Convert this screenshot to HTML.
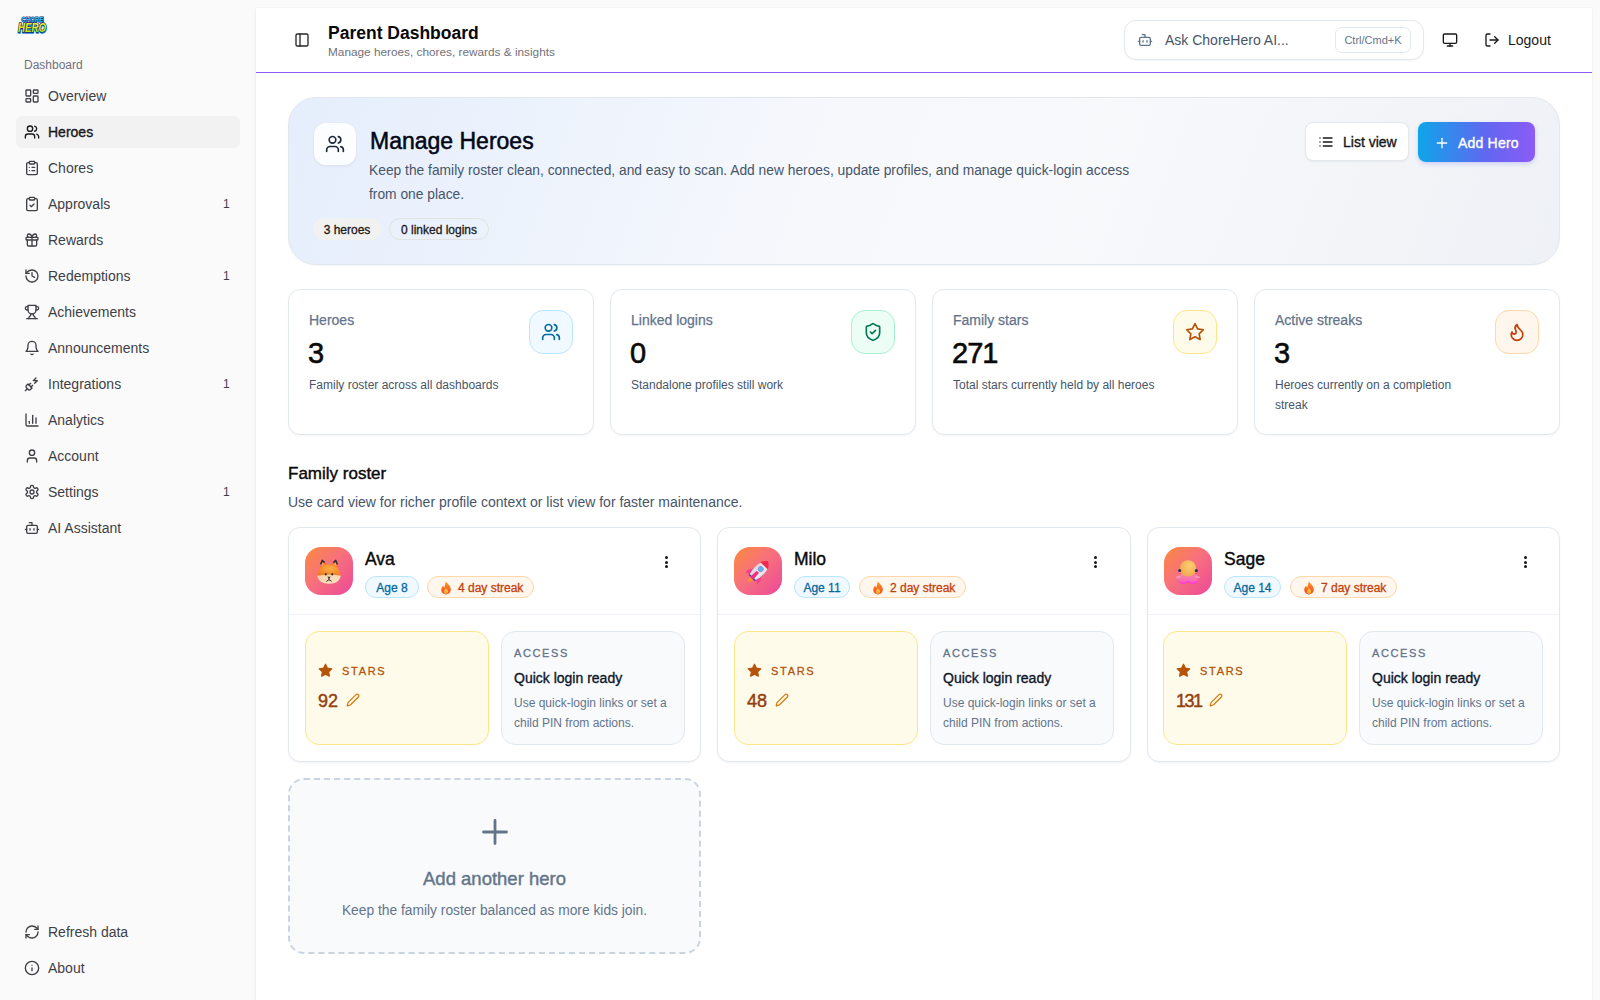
<!DOCTYPE html>
<html><head><meta charset="utf-8">
<style>
*{box-sizing:border-box;margin:0;padding:0}
html,body{width:1600px;height:1000px;overflow:hidden}
body{font-family:"Liberation Sans",sans-serif;background:#fafafa;color:#09090b;position:relative}
.abs{position:absolute}
svg.i{fill:none;stroke:currentColor;stroke-width:2;stroke-linecap:round;stroke-linejoin:round;position:absolute}
/* sidebar */
.side{position:absolute;left:0;top:0;width:256px;height:1000px;background:#fafafa}
.navlabel{position:absolute;left:24px;top:57px;font-size:12px;color:#71717a;line-height:16px}
.nav{position:absolute;left:16px;width:224px;height:32px;border-radius:6px;color:#3f3f46;font-size:14px}
.nav.active{background:#f2f2f3;color:#18181b;-webkit-text-stroke:.35px #18181b}
.nav svg{left:8px;top:8px;width:16px;height:16px}
.nav span{position:absolute;left:32px;top:0;line-height:32px;white-space:nowrap}
.nav .b{position:absolute;left:207px;top:0;line-height:32px;font-size:12px;color:#3f3f46}
/* main panel */
.panel{position:absolute;left:256px;top:8px;width:1336px;height:1000px;background:#fff;box-shadow:0 0 0 1px rgba(0,0,0,.018),-1px 1px 3px rgba(0,0,0,.035)}
.hdr{position:absolute;left:0;top:0;width:1336px;height:65px;border-bottom:1px solid #8b5cf6}

.banner{position:absolute;left:32px;top:89px;width:1272px;height:168px;border:1px solid #e1e7ef;border-radius:28px;background:linear-gradient(110deg,#e5eefc 0%,#ecf2fc 18%,#f6f8fc 42%,#f7f9fb 62%,#f2f4f8 85%,#eef1f6 100%);box-shadow:0 1px 2px rgba(15,23,42,.04)}
.chip{position:absolute;top:120px;height:22px;border-radius:11px;font-size:12px;-webkit-text-stroke:.3px #1c1917;line-height:24px;color:#1c1917;text-align:center}
.btn{position:absolute;top:24px;height:40px;border-radius:8px;font-size:14px;-webkit-text-stroke:.35px currentColor;line-height:40px}
.stat{position:absolute;top:281px;width:306px;height:146px;border:1px solid #e2e8f0;border-radius:12px;background:#fff;box-shadow:0 1px 2px rgba(0,0,0,.04)}
.stat .l{position:absolute;left:20px;top:22px;font-size:14px;-webkit-text-stroke:.25px #64748b;line-height:16px;color:#64748b}
.stat .v{position:absolute;left:19px;top:46px;font-size:29px;line-height:34px;color:#0a0a0a;-webkit-text-stroke:.6px #0a0a0a;letter-spacing:-1px}
.stat .d{position:absolute;left:20px;top:85px;width:200px;font-size:12px;line-height:20px;color:#475569}
.stat .ib{position:absolute;left:240px;top:20px;width:44px;height:44px;border-radius:14px;border:1px solid}
.stat .ib svg{left:11px;top:11px;width:20px;height:20px}

.card{position:absolute;top:519px;width:413px;height:235px;border:1px solid #e2e8f0;border-radius:12px;background:#fff;box-shadow:0 1px 2px rgba(15,23,42,.05)}
.av{position:absolute;left:16px;top:19px;width:48px;height:48px;border-radius:16px;background:linear-gradient(135deg,#fb8a3c 0%,#f8717c 45%,#ec4899 100%)}
.av svg{position:absolute;left:0;top:0}
.nm{position:absolute;left:76px;top:21px;font-size:17.5px;-webkit-text-stroke:.4px #09090b;line-height:20px;color:#09090b}
.age{position:absolute;left:76px;top:48px;height:22px;border:1px solid #bae6fd;background:#f0f9ff;border-radius:11px;color:#0369a1;font-size:12px;-webkit-text-stroke:.3px #0369a1;line-height:23px;text-align:center}
.stk{position:absolute;top:48px;height:22px;border:1px solid #fed7aa;background:#fff7ed;border-radius:11px;color:#c2410c;font-size:12px;-webkit-text-stroke:.3px #c2410c;line-height:23px}
.stk svg{position:absolute;left:12px;top:3.5px}
.stk span{position:absolute;left:30px;top:0;white-space:nowrap}
.dots{position:absolute;left:375.6px;top:27px;width:4px;height:14px}
.dots i{position:absolute;left:0;width:3px;height:3px;border-radius:50%;background:#18181b}
.dv{position:absolute;left:0;top:86px;width:411px;height:1px;background:#eef1f5}
.sb{position:absolute;left:16px;top:103px;width:184px;height:114px;border:1px solid #fde68a;background:#fffbeb;border-radius:14px}
.sb .t{position:absolute;left:36px;top:31.5px;font-size:11px;-webkit-text-stroke:.3px #b45309;letter-spacing:1.7px;color:#b45309;line-height:14px}
.sb .n{position:absolute;left:12px;top:59px;font-size:18px;-webkit-text-stroke:.45px #92400e;color:#92400e;line-height:20px}
.ab{position:absolute;left:212px;top:103px;width:184px;height:114px;border:1px solid #e2e8f0;background:#f8fafc;border-radius:14px}
.ab .t{position:absolute;left:12px;top:13.5px;font-size:11px;-webkit-text-stroke:.3px #64748b;letter-spacing:1.6px;color:#64748b;line-height:14px}
.ab .q{position:absolute;left:12px;top:38px;font-size:14px;-webkit-text-stroke:.35px #0f172a;color:#0f172a;line-height:16px}
.ab .x{position:absolute;left:12px;top:61px;width:170px;font-size:12px;color:#64748b;line-height:20px}
.addc{position:absolute;left:32px;top:770px;width:413px;height:176px;border:2px dashed #cbd5e1;border-radius:16px;background:#f8fafc}
</style></head>
<body>
<div class="side">
  <!-- logo -->
  <svg class="abs" style="left:13px;top:12px" width="38" height="24" viewBox="0 0 38 24">
    <defs><linearGradient id="hg" x1="0" y1="0" x2="0" y2="1"><stop offset="0" stop-color="#fff23a"/><stop offset=".55" stop-color="#d6f01a"/><stop offset="1" stop-color="#8ede10"/></linearGradient>
    <linearGradient id="cg" x1="0" y1="0" x2="0" y2="1"><stop offset="0" stop-color="#4fe0ff"/><stop offset="1" stop-color="#12a8ee"/></linearGradient></defs>
    <text x="19.5" y="9.6" text-anchor="middle" font-family="Liberation Sans" font-weight="bold" font-size="7" textLength="22" lengthAdjust="spacingAndGlyphs" fill="url(#cg)" stroke="#17206a" stroke-width="1.1" paint-order="stroke">CHORE</text>
    <text x="19" y="20" text-anchor="middle" font-family="Liberation Sans" font-weight="bold" font-style="italic" font-size="12" textLength="28" lengthAdjust="spacingAndGlyphs" fill="#1a8be0" stroke="#1a8be0" stroke-width="1.6" transform="translate(0.4,1.1)">HERO</text>
    <text x="19" y="20" text-anchor="middle" font-family="Liberation Sans" font-weight="bold" font-style="italic" font-size="12" textLength="28" lengthAdjust="spacingAndGlyphs" fill="url(#hg)" stroke="#17206a" stroke-width="1.3" paint-order="stroke">HERO</text>
  </svg>
  <div class="navlabel">Dashboard</div>

  <div class="nav" style="top:80px"><svg class="i" viewBox="0 0 24 24"><rect width="7" height="9" x="3" y="3" rx="1"/><rect width="7" height="5" x="14" y="3" rx="1"/><rect width="7" height="9" x="14" y="12" rx="1"/><rect width="7" height="5" x="3" y="16" rx="1"/></svg><span>Overview</span></div>
  <div class="nav active" style="top:116px"><svg class="i" viewBox="0 0 24 24"><path d="M16 21v-2a4 4 0 0 0-4-4H6a4 4 0 0 0-4 4v2"/><circle cx="9" cy="7" r="4"/><path d="M22 21v-2a4 4 0 0 0-3-3.87"/><path d="M16 3.13a4 4 0 0 1 0 7.75"/></svg><span>Heroes</span></div>
  <div class="nav" style="top:152px"><svg class="i" viewBox="0 0 24 24"><rect width="8" height="4" x="8" y="2" rx="1" ry="1"/><path d="M16 4h2a2 2 0 0 1 2 2v14a2 2 0 0 1-2 2H6a2 2 0 0 1-2-2V6a2 2 0 0 1 2-2h2"/><path d="M12 11h4"/><path d="M12 16h4"/><path d="M8 11h.01"/><path d="M8 16h.01"/></svg><span>Chores</span></div>
  <div class="nav" style="top:188px"><svg class="i" viewBox="0 0 24 24"><rect width="8" height="4" x="8" y="2" rx="1" ry="1"/><path d="M16 4h2a2 2 0 0 1 2 2v14a2 2 0 0 1-2 2H6a2 2 0 0 1-2-2V6a2 2 0 0 1 2-2h2"/><path d="m9 14 2 2 4-4"/></svg><span>Approvals</span><div class="b">1</div></div>
  <div class="nav" style="top:224px"><svg class="i" viewBox="0 0 24 24"><rect x="3" y="8" width="18" height="4" rx="1"/><path d="M12 8v13"/><path d="M19 12v7a2 2 0 0 1-2 2H7a2 2 0 0 1-2-2v-7"/><path d="M7.5 8a2.5 2.5 0 0 1 0-5A4.8 8 0 0 1 12 8a4.8 8 0 0 1 4.5-5 2.5 2.5 0 0 1 0 5"/></svg><span>Rewards</span></div>
  <div class="nav" style="top:260px"><svg class="i" viewBox="0 0 24 24"><path d="M3 12a9 9 0 1 0 9-9 9.75 9.75 0 0 0-6.74 2.74L3 8"/><path d="M3 3v5h5"/><path d="M12 7v5l4 2"/></svg><span>Redemptions</span><div class="b">1</div></div>
  <div class="nav" style="top:296px"><svg class="i" viewBox="0 0 24 24"><path d="M6 9H4.5a2.5 2.5 0 0 1 0-5H6"/><path d="M18 9h1.5a2.5 2.5 0 0 0 0-5H18"/><path d="M4 22h16"/><path d="M10 14.66V17c0 .55-.47.98-.97 1.21C7.850 18.75 7 20.24 7 22"/><path d="M14 14.66V17c0 .55.47.98.97 1.21C16.15 18.75 17 20.24 17 22"/><path d="M18 2H6v7a6 6 0 0 0 12 0V2Z"/></svg><span>Achievements</span></div>
  <div class="nav" style="top:332px"><svg class="i" viewBox="0 0 24 24"><path d="M6 8a6 6 0 0 1 12 0c0 7 3 9 3 9H3s3-2 3-9"/><path d="M10.3 21a1.94 1.94 0 0 0 3.4 0"/></svg><span>Announcements</span></div>
  <div class="nav" style="top:368px"><svg class="i" viewBox="0 0 24 24"><path d="M6.3 20.3a2.4 2.4 0 0 0 3.4 0L12 18l-6-6-2.3 2.3a2.4 2.4 0 0 0 0 3.4Z"/><path d="m2 22 3-3"/><path d="M7.5 13.5 10 11"/><path d="M10.5 16.5 13 14"/><path d="m18 3-4 4h6l-4 4"/></svg><span>Integrations</span><div class="b">1</div></div>
  <div class="nav" style="top:404px"><svg class="i" viewBox="0 0 24 24"><path d="M3 3v16a2 2 0 0 0 2 2h16"/><path d="M18 17V9"/><path d="M13 17V5"/><path d="M8 17v-3"/></svg><span>Analytics</span></div>
  <div class="nav" style="top:440px"><svg class="i" viewBox="0 0 24 24"><path d="M19 21v-2a4 4 0 0 0-4-4H9a4 4 0 0 0-4 4v2"/><circle cx="12" cy="7" r="4"/></svg><span>Account</span></div>
  <div class="nav" style="top:476px"><svg class="i" viewBox="0 0 24 24"><path d="M12.22 2h-.44a2 2 0 0 0-2 2v.18a2 2 0 0 1-1 1.730l-.43.25a2 2 0 0 1-2 0l-.15-.08a2 2 0 0 0-2.73.73l-.22.38a2 2 0 0 0 .73 2.73l.15.1a2 2 0 0 1 1 1.72v.51a2 2 0 0 1-1 1.74l-.15.09a2 2 0 0 0-.73 2.73l.22.38a2 2 0 0 0 2.73.73l.15-.08a2 2 0 0 1 2 0l.43.25a2 2 0 0 1 1 1.73V20a2 2 0 0 0 2 2h.44a2 2 0 0 0 2-2v-.18a2 2 0 0 1 1-1.73l.43-.25a2 2 0 0 1 2 0l.15.08a2 2 0 0 0 2.73-.73l.22-.39a2 2 0 0 0-.73-2.73l-.15-.08a2 2 0 0 1-1-1.74v-.5a2 2 0 0 1 1-1.74l.15-.09a2 2 0 0 0 .73-2.73l-.22-.38a2 2 0 0 0-2.73-.73l-.15.08a2 2 0 0 1-2 0l-.43-.25a2 2 0 0 1-1-1.73V4a2 2 0 0 0-2-2z"/><circle cx="12" cy="12" r="3"/></svg><span>Settings</span><div class="b">1</div></div>
  <div class="nav" style="top:512px"><svg class="i" viewBox="0 0 24 24"><path d="M12 8V4H8"/><rect width="16" height="12" x="4" y="8" rx="2"/><path d="M2 14h2"/><path d="M20 14h2"/><path d="M15 13v2"/><path d="M9 13v2"/></svg><span>AI Assistant</span></div>

  <div class="nav" style="top:916px"><svg class="i" viewBox="0 0 24 24"><path d="M3 12a9 9 0 0 1 9-9 9.75 9.75 0 0 1 6.74 2.74L21 8"/><path d="M21 3v5h-5"/><path d="M21 12a9 9 0 0 1-9 9 9.75 9.75 0 0 1-6.74-2.74L3 16"/><path d="M8 16H3v5"/></svg><span>Refresh data</span></div>
  <div class="nav" style="top:952px"><svg class="i" viewBox="0 0 24 24"><circle cx="12" cy="12" r="10"/><path d="M12 16v-4"/><path d="M12 8h.01"/></svg><span>About</span></div>
</div>

<div class="panel">
  <div class="hdr">
    <svg class="i" style="left:38px;top:24px;width:16px;height:16px;color:#27272a" viewBox="0 0 24 24"><rect width="18" height="18" x="3" y="3" rx="2"/><path d="M9 3v18"/></svg>
    <div class="abs" style="left:72px;top:14px;font-size:17.5px;font-weight:bold;line-height:22px;color:#09090b">Parent Dashboard</div>
    <div class="abs" style="left:72px;top:37px;font-size:11.8px;line-height:15px;color:#71717a">Manage heroes, chores, rewards &amp; insights</div>
    <div class="abs" style="left:868px;top:12px;width:300px;height:40px;border:1px solid #e2e8f0;border-radius:12px;background:#fff;box-shadow:0 1px 2px rgba(15,23,42,.04)">
      <svg class="i" style="left:12px;top:11px;width:16px;height:16px;color:#64748b" viewBox="0 0 24 24"><path d="M12 8V4H8"/><rect width="16" height="12" x="4" y="8" rx="2"/><path d="M2 14h2"/><path d="M20 14h2"/><path d="M15 13v2"/><path d="M9 13v2"/></svg>
      <div class="abs" style="left:40px;top:0;line-height:38px;font-size:14px;color:#475569">Ask ChoreHero AI...</div>
      <div class="abs" style="left:210px;top:6px;width:76px;height:26px;border:1px solid #e2e8f0;border-radius:7px;font-size:11px;line-height:24px;text-align:center;color:#64748b">Ctrl/Cmd+K</div>
    </div>
    <svg class="i" style="left:1186px;top:24px;width:16px;height:16px;color:#18181b" viewBox="0 0 24 24"><rect width="20" height="14" x="2" y="3" rx="2"/><line x1="8" x2="16" y1="21" y2="21"/><line x1="12" x2="12" y1="17" y2="21"/></svg>
    <svg class="i" style="left:1228px;top:24px;width:16px;height:16px;color:#18181b" viewBox="0 0 24 24"><path d="M9 21H5a2 2 0 0 1-2-2V5a2 2 0 0 1 2-2h4"/><polyline points="16 17 21 12 16 7"/><line x1="21" x2="9" y1="12" y2="12"/></svg>
    <div class="abs" style="left:1252px;top:0;line-height:64px;font-size:14px;color:#18181b">Logout</div>
  </div>


  <div class="banner">
    <div class="abs" style="left:25px;top:25px;width:42px;height:42px;border-radius:12px;background:#fcfdfe;box-shadow:0 1px 3px rgba(15,23,42,.08)">
      <svg class="i" style="left:11px;top:11px;width:20px;height:20px;color:#1e293b" viewBox="0 0 24 24"><path d="M16 21v-2a4 4 0 0 0-4-4H6a4 4 0 0 0-4 4v2"/><circle cx="9" cy="7" r="4"/><path d="M22 21v-2a4 4 0 0 0-3-3.87"/><path d="M16 3.13a4 4 0 0 1 0 7.75"/></svg>
    </div>
    <div class="abs" style="left:81px;top:29px;font-size:23px;-webkit-text-stroke:.5px #020617;line-height:28px;color:#020617">Manage Heroes</div>
    <div class="abs" style="left:80px;top:61px;width:790px;font-size:13.8px;line-height:24px;color:#475569">Keep the family roster clean, connected, and easy to scan. Add new heroes, update profiles, and manage quick-login access from one place.</div>
    <div class="chip" style="left:24px;width:68px;background:#f1f1f0">3 heroes</div>
    <div class="chip" style="left:100px;width:100px;border:1px solid #e2e2e0;line-height:22px">0 linked logins</div>
    <div class="btn" style="left:1016px;width:104px;top:24px;height:39px;line-height:38px;background:#fff;border:1px solid #e2e8f0;color:#171717;box-shadow:0 1px 2px rgba(0,0,0,.05)">
      <svg class="i" style="left:12px;top:11px;width:16px;height:16px" viewBox="0 0 24 24"><path d="M3 12h.01"/><path d="M3 18h.01"/><path d="M3 6h.01"/><path d="M8 12h13"/><path d="M8 18h13"/><path d="M8 6h13"/></svg>
      <span class="abs" style="left:37px;top:0">List view</span>
    </div>
    <div class="btn" style="left:1129px;width:117px;top:24px;background:linear-gradient(90deg,#0ea5e9 0%,#6366f1 60%,#8b5cf6 100%);color:#fff;box-shadow:0 2px 4px rgba(99,102,241,.25)">
      <svg class="i" style="left:16px;top:12.5px;width:16px;height:16px" viewBox="0 0 24 24"><path d="M5 12h14"/><path d="M12 5v14"/></svg>
      <span class="abs" style="left:40px;top:1px;letter-spacing:.2px">Add Hero</span>
    </div>
  </div>

  <div class="stat" style="left:32px">
    <div class="l">Heroes</div><div class="v">3</div><div class="d">Family roster across all dashboards</div>
    <div class="ib" style="background:#f0f9ff;border-color:#bae6fd;color:#0369a1"><svg class="i" viewBox="0 0 24 24"><path d="M16 21v-2a4 4 0 0 0-4-4H6a4 4 0 0 0-4 4v2"/><circle cx="9" cy="7" r="4"/><path d="M22 21v-2a4 4 0 0 0-3-3.87"/><path d="M16 3.13a4 4 0 0 1 0 7.75"/></svg></div>
  </div>
  <div class="stat" style="left:354px">
    <div class="l">Linked logins</div><div class="v">0</div><div class="d">Standalone profiles still work</div>
    <div class="ib" style="background:#ecfdf5;border-color:#a7f3d0;color:#047857"><svg class="i" viewBox="0 0 24 24"><path d="M20 13c0 5-3.5 7.5-7.66 8.95a1 1 0 0 1-.67-.01C7.5 20.5 4 18 4 13V6a1 1 0 0 1 1-1c2 0 4.5-1.2 6.24-2.72a1.17 1.17 0 0 1 1.52 0C14.51 3.810 17 5 19 5a1 1 0 0 1 1 1z"/><path d="m9 12 2 2 4-4"/></svg></div>
  </div>
  <div class="stat" style="left:676px">
    <div class="l">Family stars</div><div class="v">271</div><div class="d" style="width:230px">Total stars currently held by all heroes</div>
    <div class="ib" style="background:#fffbeb;border-color:#fde68a;color:#b45309"><svg class="i" viewBox="0 0 24 24"><polygon points="12 2 15.09 8.26 22 9.27 17 14.14 18.18 21.02 12 17.77 5.82 21.02 7 14.14 2 9.27 8.91 8.26 12 2"/></svg></div>
  </div>
  <div class="stat" style="left:998px">
    <div class="l">Active streaks</div><div class="v">3</div><div class="d" style="width:190px">Heroes currently on a completion streak</div>
    <div class="ib" style="background:#fff7ed;border-color:#fed7aa;color:#c2410c"><svg class="i" viewBox="0 0 24 24"><path d="M8.5 14.5A2.5 2.5 0 0 0 11 12c0-1.38-.5-2-1-3-1.072-2.143-.224-4.054 2-6 .5 2.5 2 4.9 4 6.5 2 1.6 3 3.5 3 5.5a7 7 0 1 1-14 0c0-1.153.433-2.294 1-3a2.5 2.5 0 0 0 2.5 2.5z"/></svg></div>
  </div>

  <div class="abs" style="left:32px;top:456px;font-size:17px;-webkit-text-stroke:.4px #09090b;line-height:20px;color:#09090b">Family roster</div>
  <div class="abs" style="left:32px;top:485px;font-size:14px;line-height:18px;color:#475569">Use card view for richer profile context or list view for faster maintenance.</div>

  <div class="card" style="left:32px">
    <div class="av"><svg width="48" height="48" viewBox="0 0 48 48"><defs><radialGradient id="fh" cx=".55" cy=".35" r=".7"><stop offset="0" stop-color="#fbad4a"/><stop offset="1" stop-color="#ee7a1c"/></radialGradient><linearGradient id="fm" x1="0" y1="0" x2="1" y2="1"><stop offset="0" stop-color="#f6cfa8"/><stop offset="1" stop-color="#fde6c6"/></linearGradient></defs>
<path d="M14.2 25 L17.3 13.6 L23.5 19.5Z" fill="#ec7420"/><path d="M33.8 25 L30.7 13.6 L24.5 19.5Z" fill="#ec7420"/>
<path d="M16.3 19 L17.3 15.2 L19.8 17.8Z" fill="#f7a070"/><path d="M31.7 19 L30.7 15.2 L28.2 17.8Z" fill="#f7a070"/>
<path d="M15.6 17.4 L17.3 13.4 L19.6 15.6" fill="none" stroke="#3a2c34" stroke-width="1.5" stroke-linejoin="round"/><path d="M32.4 17.4 L30.7 13.4 L28.4 15.6" fill="none" stroke="#3a2c34" stroke-width="1.5" stroke-linejoin="round"/>
<path d="M12.6 29.5 C12.6 21 17.2 17.2 24 17.2 C30.8 17.2 35.4 21 35.4 29.5Z" fill="url(#fh)"/>
<path d="M12.2 28.8 Q24 26.8 35.8 28.8 Q34.4 36.8 24 36.8 Q13.6 36.8 12.2 28.8Z" fill="url(#fm)"/>
<ellipse cx="20.8" cy="27.2" rx=".9" ry="1.2" fill="#3a2a2e"/><ellipse cx="27.2" cy="27.2" rx=".9" ry="1.2" fill="#3a2a2e"/>
<path d="M22.3 29.8h3.4l-1.7 1.9z" fill="#2e2226"/><path d="M24 31.4v1.4M21.6 34.2l2.4-1.5 2.4 1.5" stroke="#2e2226" stroke-width=".9" fill="none" stroke-linecap="round"/>
</svg></div>
    <div class="nm">Ava</div>
    <div class="age" style="width:54px">Age 8</div>
    <div class="stk" style="left:138px;width:107px"><svg width="12" height="14" viewBox="0 0 12 14"><defs><linearGradient id="fl" x1="0" y1="0" x2="0" y2="1"><stop offset="0" stop-color="#ff9a2e"/><stop offset="1" stop-color="#f0441e"/></linearGradient><linearGradient id="fl2" x1="0" y1="0" x2="0" y2="1"><stop offset="0" stop-color="#ffd24a"/><stop offset="1" stop-color="#ff9a2e"/></linearGradient></defs><path d="M6 .6C6.8 2.6 10.8 4.6 10.8 8.6 10.8 11.4 8.7 13.4 6 13.4S1.2 11.4 1.2 8.8C1.2 6.6 2.6 5.4 3.2 4.4 3.6 5.6 4 6.2 4.6 6.4 4.6 4.2 5.4 2.2 6 .6Z" fill="url(#fl)"/><path d="M6 7.2C7 8.4 8.2 9.4 8.2 10.8 8.2 12.2 7.2 13.2 6 13.2S3.8 12.2 3.8 10.8C3.8 9.4 5 8.6 6 7.2Z" fill="url(#fl2)"/></svg><span>4 day streak</span></div>
    <div class="dots"><i style="top:1.2px"></i><i style="top:5.8px"></i><i style="top:10.4px"></i></div>
    <div class="dv"></div>
    <div class="sb"><svg class="abs" style="left:12px;top:31px" width="15" height="15" viewBox="0 0 24 24"><polygon points="12 2 15.09 8.26 22 9.27 17 14.14 18.18 21.02 12 17.77 5.82 21.02 7 14.14 2 9.27 8.91 8.26 12 2" fill="#b45309" stroke="#b45309" stroke-width="2" stroke-linejoin="round"/></svg><div class="t">STARS</div><div class="n">92</div><svg class="i" style="left:40px;top:61px;width:14px;height:14px;color:#d97706" viewBox="0 0 24 24"><path d="M21.174 6.812a1 1 0 0 0-3.986-3.987L3.842 16.174a2 2 0 0 0-.5.83l-1.321 4.352a.5.5 0 0 0 .623.622l4.353-1.32a2 2 0 0 0 .83-.497z"/></svg></div>
    <div class="ab"><div class="t">ACCESS</div><div class="q">Quick login ready</div><div class="x">Use quick-login links or set a child PIN from actions.</div></div>
  </div>
  <div class="card" style="left:461px;width:414px">
    <div class="av"><svg width="48" height="48" viewBox="0 0 48 48"><defs><linearGradient id="rb" x1="0" y1="0" x2="1" y2="0"><stop offset="0" stop-color="#d9d3e0"/><stop offset=".6" stop-color="#f4f0f6"/><stop offset="1" stop-color="#e4dcea"/></linearGradient></defs>
<g transform="translate(24.6 24.2) rotate(45)">
<path d="M-2.6 10.5 Q0 19 2.6 10.5Z" fill="#f7932a"/>
<path d="M-4.6 0 L-8.6 6.4 L-8.4 10.2 L-3.8 8Z" fill="#f0408a"/><path d="M4.6 0 L8.6 6.4 L8.4 10.2 L3.8 8Z" fill="#f0408a"/>
<path d="M0 -14 C5.4 -10 6 -3 5.4 3 L4.2 8.4 L-4.2 8.4 L-5.4 3 C-6 -3 -5.4 -10 0 -14Z" fill="url(#rb)"/>
<path d="M0 -14 C3 -12 4.4 -9.8 5 -7.6 L-5 -7.6 C-4.4 -9.8 -3 -12 0 -14Z" fill="#f0294f"/>
<rect x="-4.4" y="8.2" width="8.8" height="1.6" fill="#5b3f8e"/>
<path d="M-1.6 1 L1.6 1 L2 9.6 L-2 9.6Z" fill="#f0307e"/>
<circle cx="0" cy="-3" r="2.6" fill="#5fb4f8" stroke="#7d86c2" stroke-width=".7"/>
</g></svg></div>
    <div class="nm">Milo</div>
    <div class="age" style="width:56px">Age 11</div>
    <div class="stk" style="left:141px;width:107px"><svg width="12" height="14" viewBox="0 0 12 14"><defs><linearGradient id="fl" x1="0" y1="0" x2="0" y2="1"><stop offset="0" stop-color="#ff9a2e"/><stop offset="1" stop-color="#f0441e"/></linearGradient><linearGradient id="fl2" x1="0" y1="0" x2="0" y2="1"><stop offset="0" stop-color="#ffd24a"/><stop offset="1" stop-color="#ff9a2e"/></linearGradient></defs><path d="M6 .6C6.8 2.6 10.8 4.6 10.8 8.6 10.8 11.4 8.7 13.4 6 13.4S1.2 11.4 1.2 8.8C1.2 6.6 2.6 5.4 3.2 4.4 3.6 5.6 4 6.2 4.6 6.4 4.6 4.2 5.4 2.2 6 .6Z" fill="url(#fl)"/><path d="M6 7.2C7 8.4 8.2 9.4 8.2 10.8 8.2 12.2 7.2 13.2 6 13.2S3.8 12.2 3.8 10.8C3.8 9.4 5 8.6 6 7.2Z" fill="url(#fl2)"/></svg><span>2 day streak</span></div>
    <div class="dots"><i style="top:1.2px"></i><i style="top:5.8px"></i><i style="top:10.4px"></i></div>
    <div class="dv"></div>
    <div class="sb"><svg class="abs" style="left:12px;top:31px" width="15" height="15" viewBox="0 0 24 24"><polygon points="12 2 15.09 8.26 22 9.27 17 14.14 18.18 21.02 12 17.77 5.82 21.02 7 14.14 2 9.27 8.91 8.26 12 2" fill="#b45309" stroke="#b45309" stroke-width="2" stroke-linejoin="round"/></svg><div class="t">STARS</div><div class="n">48</div><svg class="i" style="left:40px;top:61px;width:14px;height:14px;color:#d97706" viewBox="0 0 24 24"><path d="M21.174 6.812a1 1 0 0 0-3.986-3.987L3.842 16.174a2 2 0 0 0-.5.83l-1.321 4.352a.5.5 0 0 0 .623.622l4.353-1.32a2 2 0 0 0 .83-.497z"/></svg></div>
    <div class="ab"><div class="t">ACCESS</div><div class="q">Quick login ready</div><div class="x">Use quick-login links or set a child PIN from actions.</div></div>
  </div>
  <div class="card" style="left:891px">
    <div class="av"><svg width="48" height="48" viewBox="0 0 48 48"><defs><radialGradient id="oh" cx=".6" cy=".35" r=".75"><stop offset="0" stop-color="#fcd070"/><stop offset="1" stop-color="#eea24e"/></radialGradient><linearGradient id="ob" x1="0" y1="0" x2="0" y2="1"><stop offset="0" stop-color="#f88a9a"/><stop offset="1" stop-color="#f65fc0"/></linearGradient></defs>
<path d="M14.6 28 Q13 33 15.4 34.6 Q19 37.4 24 34 Q29 37.4 32.6 34.6 Q35 33 33.4 28 Q24 24 14.6 28Z" fill="url(#ob)"/>
<path d="M15.4 35 Q19.6 37.8 24 34.4 Q28.4 37.8 32.6 35" fill="none" stroke="#ff3fd2" stroke-width="1.6" stroke-linecap="round"/>
<path d="M12.6 30.6 Q14 29 16.6 30.4 M35.4 30.6 Q34 29 31.4 30.4" fill="none" stroke="#f89ab6" stroke-width="1.3" stroke-linecap="round"/>
<circle cx="24" cy="21.4" r="8.2" fill="url(#oh)"/>
<circle cx="15.7" cy="23.4" r="1.5" fill="#2c2b58"/><circle cx="32.3" cy="23.4" r="1.5" fill="#2c2b58"/>
</svg></div>
    <div class="nm">Sage</div>
    <div class="age" style="width:57px">Age 14</div>
    <div class="stk" style="left:142px;width:107px"><svg width="12" height="14" viewBox="0 0 12 14"><defs><linearGradient id="fl" x1="0" y1="0" x2="0" y2="1"><stop offset="0" stop-color="#ff9a2e"/><stop offset="1" stop-color="#f0441e"/></linearGradient><linearGradient id="fl2" x1="0" y1="0" x2="0" y2="1"><stop offset="0" stop-color="#ffd24a"/><stop offset="1" stop-color="#ff9a2e"/></linearGradient></defs><path d="M6 .6C6.8 2.6 10.8 4.6 10.8 8.6 10.8 11.4 8.7 13.4 6 13.4S1.2 11.4 1.2 8.8C1.2 6.6 2.6 5.4 3.2 4.4 3.6 5.6 4 6.2 4.6 6.4 4.6 4.2 5.4 2.2 6 .6Z" fill="url(#fl)"/><path d="M6 7.2C7 8.4 8.2 9.4 8.2 10.8 8.2 12.2 7.2 13.2 6 13.2S3.8 12.2 3.8 10.8C3.8 9.4 5 8.6 6 7.2Z" fill="url(#fl2)"/></svg><span>7 day streak</span></div>
    <div class="dots"><i style="top:1.2px"></i><i style="top:5.8px"></i><i style="top:10.4px"></i></div>
    <div class="dv"></div>
    <div class="sb" style="left:15px"><svg class="abs" style="left:12px;top:31px" width="15" height="15" viewBox="0 0 24 24"><polygon points="12 2 15.09 8.26 22 9.27 17 14.14 18.18 21.02 12 17.77 5.82 21.02 7 14.14 2 9.27 8.91 8.26 12 2" fill="#b45309" stroke="#b45309" stroke-width="2" stroke-linejoin="round"/></svg><div class="t">STARS</div><div class="n" style="letter-spacing:-1.5px">131</div><svg class="i" style="left:45px;top:61px;width:14px;height:14px;color:#d97706" viewBox="0 0 24 24"><path d="M21.174 6.812a1 1 0 0 0-3.986-3.987L3.842 16.174a2 2 0 0 0-.5.83l-1.321 4.352a.5.5 0 0 0 .623.622l4.353-1.32a2 2 0 0 0 .83-.497z"/></svg></div>
    <div class="ab" style="left:211px"><div class="t">ACCESS</div><div class="q">Quick login ready</div><div class="x">Use quick-login links or set a child PIN from actions.</div></div>
  </div>
  <div class="addc">
    <svg class="abs" style="left:192px;top:39px" width="26" height="26" viewBox="0 0 26 26"><path d="M1.5 13h23M13 1.5v23" stroke="#64748b" stroke-width="2.8" stroke-linecap="round"/></svg>
    <div class="abs" style="left:0;top:88px;width:409px;text-align:center;font-size:18.5px;-webkit-text-stroke:.4px #64748b;line-height:22px;color:#64748b">Add another hero</div>
    <div class="abs" style="left:0;top:122px;width:409px;text-align:center;font-size:13.8px;line-height:18px;color:#64748b">Keep the family roster balanced as more kids join.</div>
  </div>
</div>
</body></html>
